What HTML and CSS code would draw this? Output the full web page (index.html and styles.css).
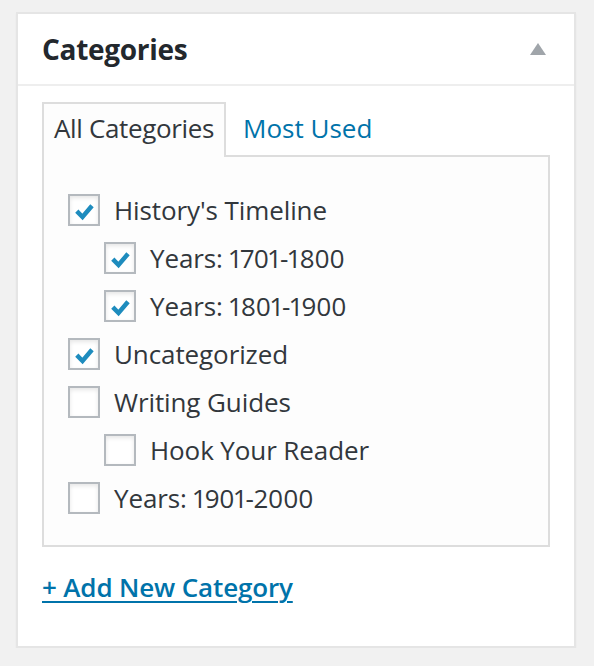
FILE: index.html
```html
<!DOCTYPE html>
<html>
<head>
<meta charset="utf-8">
<link rel="stylesheet" href="styles.css">
</head>
<body>
<div class="postbox">
  <div class="hndle">
    <h2 class="title">Categories</h2>
    <svg class="toggle" width="16" height="12" viewBox="0 0 16 12"><polygon points="8,0 16,12 0,12" fill="#a0a5aa"/></svg>
  </div>
  <div class="inside">
    <ul class="tabs">
      <li class="tab active">All Categories</li>
      <li class="tab other"><a href="#">Most Used</a></li>
    </ul>
    <div class="panel">
      <ul class="checklist">
        <li class="row"><span class="cb"><svg viewBox="0 0 28 28"><polyline points="6.8,15.2 12.5,21 22,9.8"/></svg></span><span class="lbl">History's Timeline</span></li>
        <li class="row child"><span class="cb"><svg viewBox="0 0 28 28"><polyline points="6.8,15.2 12.5,21 22,9.8"/></svg></span><span class="lbl">Years: 1701-1800</span></li>
        <li class="row child"><span class="cb"><svg viewBox="0 0 28 28"><polyline points="6.8,15.2 12.5,21 22,9.8"/></svg></span><span class="lbl">Years: 1801-1900</span></li>
        <li class="row"><span class="cb"><svg viewBox="0 0 28 28"><polyline points="6.8,15.2 12.5,21 22,9.8"/></svg></span><span class="lbl">Uncategorized</span></li>
        <li class="row"><span class="cb"></span><span class="lbl">Writing Guides</span></li>
        <li class="row child"><span class="cb"></span><span class="lbl">Hook Your Reader</span></li>
        <li class="row"><span class="cb"></span><span class="lbl">Years: 1901-2000</span></li>
      </ul>
    </div>
    <a class="add" href="#">+ Add New Category</a>
  </div>
</div>
</body>
</html>
```
FILE: styles.css
```css
html, body {
  margin: 0;
  padding: 0;
  background: #f1f1f1;
}
body {
  padding: 12px 0 0 16px;
  font-family: "Open Sans", "Noto Sans", sans-serif;
  color: #32373c;
  font-variant-numeric: proportional-nums;
}
.postbox {
  width: 560px;
  height: 636px;
  box-sizing: border-box;
  background: #fff;
  border: 2px solid #e5e5e5;
  box-shadow: 0 2px 2px rgba(0, 0, 0, 0.04);
}
.hndle {
  display: flex;
  align-items: center;
  justify-content: space-between;
  padding: 16px 28px 16px 24px;
  border-bottom: 2px solid #eeeeee;
}
.title {
  margin: 0;
  font-size: 28px;
  line-height: 38px;
  font-weight: 700;
  letter-spacing: -0.3px;
  color: #23282d;
}
.toggle {
  display: block;
}
.inside {
  padding: 16px 24px 0;
}
.tabs {
  display: flex;
  margin: 0;
  padding: 0;
  list-style: none;
}
.tab {
  font-size: 26px;
  line-height: 36px;
  letter-spacing: -0.35px;
  padding: 6px 10px 11px;
  border: 2px solid transparent;
  border-bottom: 0;
  margin-bottom: -2px;
  position: relative;
  z-index: 1;
}
.tab.other {
  letter-spacing: 0;
  margin-left: 5px;
}
.tab.active {
  border-color: #dddddd;
  background: #fdfdfd;
  color: #32373c;
}
.tab a {
  color: #0073aa;
  text-decoration: none;
}
.panel {
  border: 2px solid #dddddd;
  background: #fdfdfd;
  padding: 29px 24px 23px;
}
.checklist {
  margin: 0;
  padding: 0;
  list-style: none;
}
.row {
  display: flex;
  align-items: center;
  height: 48px;
}
.row.child {
  padding-left: 36px;
}
.cb {
  flex: none;
  width: 32px;
  height: 32px;
  box-sizing: border-box;
  border: 2px solid #b4b9be;
  background: #fff;
  box-shadow: inset 0 2px 4px rgba(0, 0, 0, 0.1);
}
.cb svg {
  display: block;
  width: 28px;
  height: 28px;
  fill: none;
  stroke: #1e8cbe;
  stroke-width: 4.5;
  stroke-linejoin: miter;
}
.lbl {
  margin-left: 14px;
  font-size: 26px;
  line-height: 36px;
  letter-spacing: -0.1px;
  color: #32373c;
}
.add {
  display: inline-block;
  margin-top: 22px;
  font-size: 26px;
  line-height: 36px;
  font-weight: 600;
  letter-spacing: -0.15px;
  color: #0073aa;
  text-decoration: underline;
  text-decoration-thickness: 2px;
  text-underline-offset: 4px;
}
```
